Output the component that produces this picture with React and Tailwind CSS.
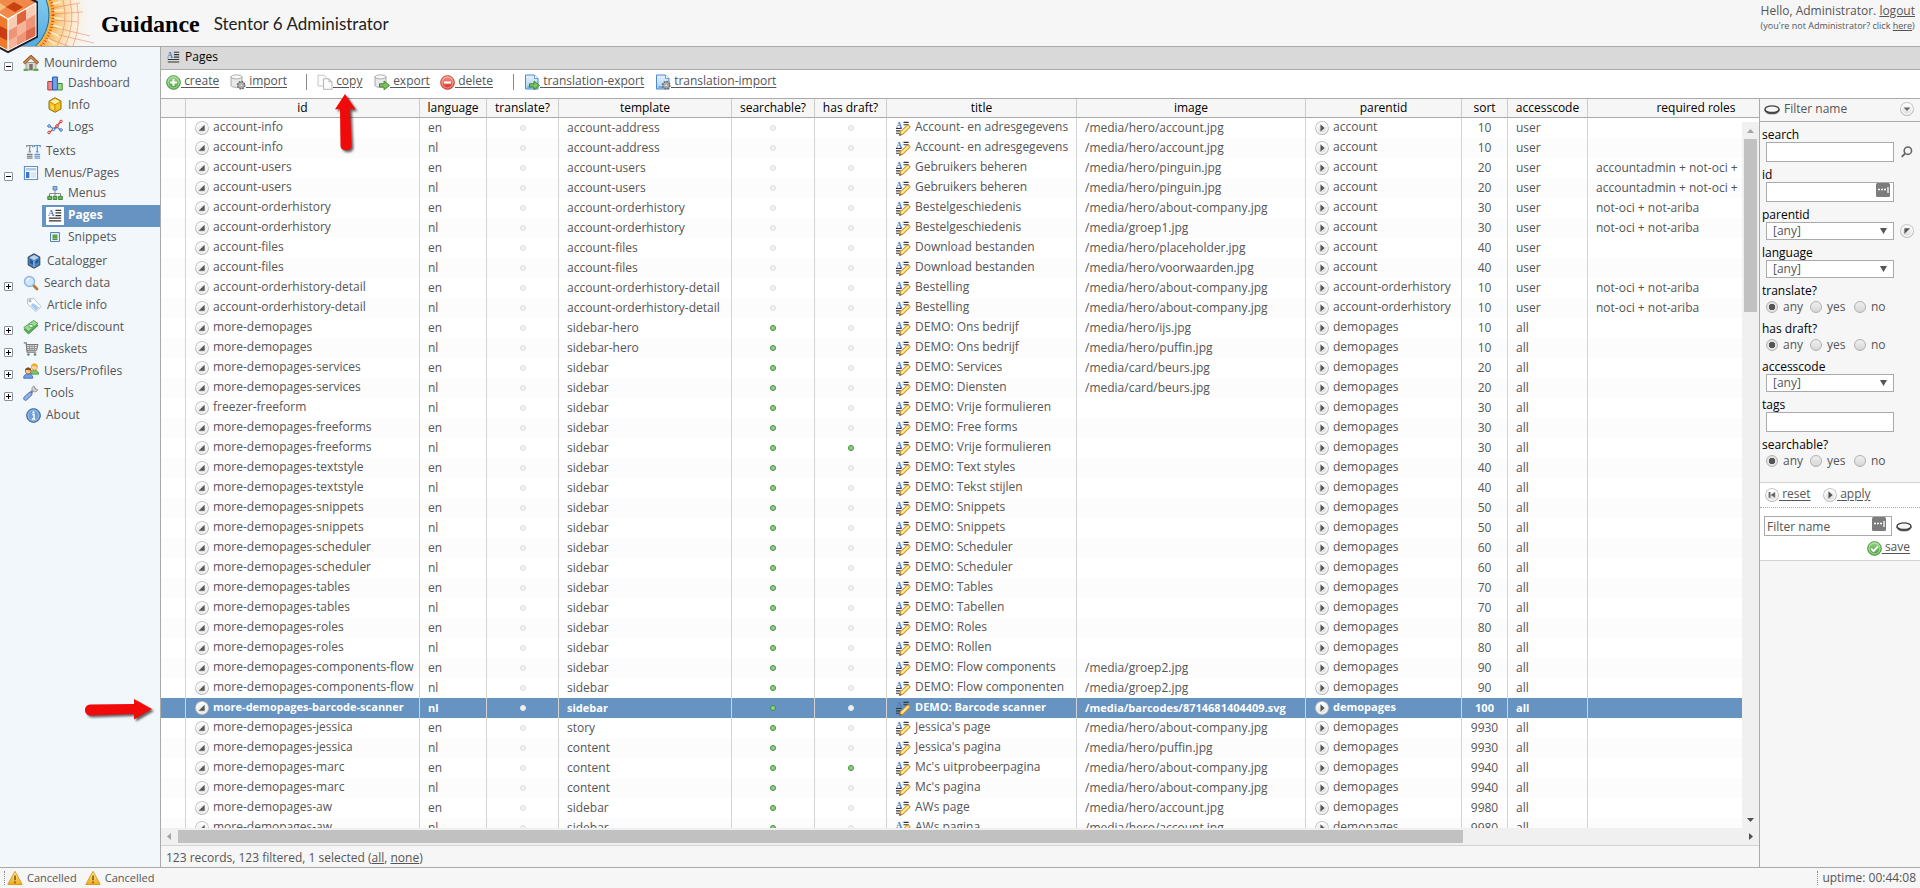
import clsx from 'clsx'

const columns = [
    { key: 'mark', label: '', width: 'w-[25px]' },
    { key: 'id', label: 'id', width: 'w-[234px]' },
    { key: 'language', label: 'language', width: 'w-[67px]' },
    { key: 'translate', label: 'translate?', width: 'w-[72px]' },
    { key: 'template', label: 'template', width: 'w-[173px]' },
    { key: 'searchable', label: 'searchable?', width: 'w-[83px]' },
    { key: 'draft', label: 'has draft?', width: 'w-[72px]' },
    { key: 'title', label: 'title', width: 'w-[190px]' },
    { key: 'image', label: 'image', width: 'w-[229px]' },
    { key: 'parentid', label: 'parentid', width: 'w-[156px]' },
    { key: 'sort', label: 'sort', width: 'w-[46px]' },
    { key: 'accesscode', label: 'accesscode', width: 'w-[80px]' },
    { key: 'roles', label: 'required roles', width: 'w-[217px]' },
]

// id, language, template, searchable, draft, title, image, parentid, sort, accesscode, roles
const rows = [
    ['account-info', 'en', 'account-address', 0, 0, 'Account- en adresgegevens', '/media/hero/account.jpg', 'account', 10, 'user', ''],
    ['account-info', 'nl', 'account-address', 0, 0, 'Account- en adresgegevens', '/media/hero/account.jpg', 'account', 10, 'user', ''],
    ['account-users', 'en', 'account-users', 0, 0, 'Gebruikers beheren', '/media/hero/pinguin.jpg', 'account', 20, 'user', 'accountadmin + not-oci +'],
    ['account-users', 'nl', 'account-users', 0, 0, 'Gebruikers beheren', '/media/hero/pinguin.jpg', 'account', 20, 'user', 'accountadmin + not-oci +'],
    ['account-orderhistory', 'en', 'account-orderhistory', 0, 0, 'Bestelgeschiedenis', '/media/hero/about-company.jpg', 'account', 30, 'user', 'not-oci + not-ariba'],
    ['account-orderhistory', 'nl', 'account-orderhistory', 0, 0, 'Bestelgeschiedenis', '/media/groep1.jpg', 'account', 30, 'user', 'not-oci + not-ariba'],
    ['account-files', 'en', 'account-files', 0, 0, 'Download bestanden', '/media/hero/placeholder.jpg', 'account', 40, 'user', ''],
    ['account-files', 'nl', 'account-files', 0, 0, 'Download bestanden', '/media/hero/voorwaarden.jpg', 'account', 40, 'user', ''],
    ['account-orderhistory-detail', 'en', 'account-orderhistory-detail', 0, 0, 'Bestelling', '/media/hero/about-company.jpg', 'account-orderhistory', 10, 'user', 'not-oci + not-ariba'],
    ['account-orderhistory-detail', 'nl', 'account-orderhistory-detail', 0, 0, 'Bestelling', '/media/hero/about-company.jpg', 'account-orderhistory', 10, 'user', 'not-oci + not-ariba'],
    ['more-demopages', 'en', 'sidebar-hero', 1, 0, 'DEMO: Ons bedrijf', '/media/hero/ijs.jpg', 'demopages', 10, 'all', ''],
    ['more-demopages', 'nl', 'sidebar-hero', 1, 0, 'DEMO: Ons bedrijf', '/media/hero/puffin.jpg', 'demopages', 10, 'all', ''],
    ['more-demopages-services', 'en', 'sidebar', 1, 0, 'DEMO: Services', '/media/card/beurs.jpg', 'demopages', 20, 'all', ''],
    ['more-demopages-services', 'nl', 'sidebar', 1, 0, 'DEMO: Diensten', '/media/card/beurs.jpg', 'demopages', 20, 'all', ''],
    ['freezer-freeform', 'nl', 'sidebar', 1, 0, 'DEMO: Vrije formulieren', '', 'demopages', 30, 'all', ''],
    ['more-demopages-freeforms', 'en', 'sidebar', 1, 0, 'DEMO: Free forms', '', 'demopages', 30, 'all', ''],
    ['more-demopages-freeforms', 'nl', 'sidebar', 1, 1, 'DEMO: Vrije formulieren', '', 'demopages', 30, 'all', ''],
    ['more-demopages-textstyle', 'en', 'sidebar', 1, 0, 'DEMO: Text styles', '', 'demopages', 40, 'all', ''],
    ['more-demopages-textstyle', 'nl', 'sidebar', 1, 0, 'DEMO: Tekst stijlen', '', 'demopages', 40, 'all', ''],
    ['more-demopages-snippets', 'en', 'sidebar', 1, 0, 'DEMO: Snippets', '', 'demopages', 50, 'all', ''],
    ['more-demopages-snippets', 'nl', 'sidebar', 1, 0, 'DEMO: Snippets', '', 'demopages', 50, 'all', ''],
    ['more-demopages-scheduler', 'en', 'sidebar', 1, 0, 'DEMO: Scheduler', '', 'demopages', 60, 'all', ''],
    ['more-demopages-scheduler', 'nl', 'sidebar', 1, 0, 'DEMO: Scheduler', '', 'demopages', 60, 'all', ''],
    ['more-demopages-tables', 'en', 'sidebar', 1, 0, 'DEMO: Tables', '', 'demopages', 70, 'all', ''],
    ['more-demopages-tables', 'nl', 'sidebar', 1, 0, 'DEMO: Tabellen', '', 'demopages', 70, 'all', ''],
    ['more-demopages-roles', 'en', 'sidebar', 1, 0, 'DEMO: Roles', '', 'demopages', 80, 'all', ''],
    ['more-demopages-roles', 'nl', 'sidebar', 1, 0, 'DEMO: Rollen', '', 'demopages', 80, 'all', ''],
    ['more-demopages-components-flow', 'en', 'sidebar', 1, 0, 'DEMO: Flow components', '/media/groep2.jpg', 'demopages', 90, 'all', ''],
    ['more-demopages-components-flow', 'nl', 'sidebar', 1, 0, 'DEMO: Flow componenten', '/media/groep2.jpg', 'demopages', 90, 'all', ''],
    ['more-demopages-barcode-scanner', 'nl', 'sidebar', 1, 0, 'DEMO: Barcode scanner', '/media/barcodes/8714681404409.svg', 'demopages', 100, 'all', ''],
    ['more-demopages-jessica', 'en', 'story', 1, 0, "Jessica's page", '/media/hero/about-company.jpg', 'demopages', 9930, 'all', ''],
    ['more-demopages-jessica', 'nl', 'content', 1, 0, "Jessica's pagina", '/media/hero/puffin.jpg', 'demopages', 9930, 'all', ''],
    ['more-demopages-marc', 'en', 'content', 1, 1, "Mc's uitprobeerpagina", '/media/hero/about-company.jpg', 'demopages', 9940, 'all', ''],
    ['more-demopages-marc', 'nl', 'content', 1, 0, "Mc's pagina", '/media/hero/about-company.jpg', 'demopages', 9940, 'all', ''],
    ['more-demopages-aw', 'en', 'sidebar', 1, 0, 'AWs page', '/media/hero/account.jpg', 'demopages', 9980, 'all', ''],
    ['more-demopages-aw', 'nl', 'sidebar', 1, 0, 'AWs pagina', '/media/hero/account.jpg', 'demopages', 9980, 'all', ''],
]

const SELECTED = 'more-demopages-barcode-scanner'

const Svg = ({ size = 16, className, children }) => (
    <svg width={size} height={size} viewBox="0 0 16 16" className={clsx('block shrink-0', className)} aria-hidden="true">
        {children}
    </svg>
)

// Shared gradients, referenced by id from the icons
const Gradients = () => (
    <svg width="0" height="0" className="absolute" aria-hidden="true">
        <defs>
            <linearGradient id="silver" x1="0" y1="0" x2="0" y2="1">
                <stop offset="0" stopColor="#fff" />
                <stop offset="1" stopColor="#dcdcdc" />
            </linearGradient>
            <linearGradient id="green" x1="0" y1="0" x2="0" y2="1">
                <stop offset="0" stopColor="#9fd68c" />
                <stop offset="1" stopColor="#3f9c35" />
            </linearGradient>
            <linearGradient id="red" x1="0" y1="0" x2="0" y2="1">
                <stop offset="0" stopColor="#f79a8c" />
                <stop offset="1" stopColor="#d8271c" />
            </linearGradient>
            <linearGradient id="blue" x1="0" y1="0" x2="0" y2="1">
                <stop offset="0" stopColor="#e6f2fd" />
                <stop offset="1" stopColor="#a9cff3" />
            </linearGradient>
            <linearGradient id="amber" x1="0" y1="0" x2="0" y2="1">
                <stop offset="0" stopColor="#fff3a0" />
                <stop offset="1" stopColor="#f0a818" />
            </linearGradient>
            <radialGradient id="glow" cx="6" cy="15" r="88" gradientUnits="userSpaceOnUse">
                <stop offset="0.5" stopColor="#f2a73a" />
                <stop offset="0.62" stopColor="#f8d08a" />
                <stop offset="0.78" stopColor="#fcecd0" />
                <stop offset="1" stopColor="#f6f6f6" stopOpacity="0" />
            </radialGradient>
            <linearGradient id="sky" x1="0" y1="0" x2="0" y2="1">
                <stop offset="0" stopColor="#9adcf6" />
                <stop offset="1" stopColor="#4aa2dc" />
            </linearGradient>
            <clipPath id="banner"><path d="M0 0h96v46H0z" /></clipPath>
        </defs>
    </svg>
)

/* ---- icons ---- */

const RoundButton = ({ size = 14, children }) => (
    <Svg size={size}>
        <circle cx="8" cy="8.2" r="7.8" fill="#b4b4b4" />
        <circle cx="8" cy="7.8" r="7.6" fill="#cdcdcd" />
        <circle cx="8" cy="7.8" r="6.7" fill="#fff" />
        <circle cx="8" cy="7.8" r="5.6" fill="url(#silver)" />
        {children}
    </Svg>
)
const OpenIcon = () => <RoundButton><path d="M11 4.4v6.8H4.2z" fill="#555" /></RoundButton>
const PlayIcon = () => <RoundButton><path d="M6.2 3.8L11 8l-4.800 4.200z" fill="#555" /></RoundButton>
const DownIcon = () => <RoundButton><path d="M4.2 6.2h7.6L8 10.400z" fill="#666" /></RoundButton>
const CornerIcon = () => <RoundButton><path d="M5 4.800h6.600L5 11.400z" fill="#555" /></RoundButton>
const RewindIcon = () => <RoundButton><path d="M4.2 4.600h2v6.600h-2zM11.600 4.600v6.600L6.400 7.900z" fill="#666" /></RoundButton>

const TextLines = () => (
    <>
        <text x="0" y="8" fontSize="10" fontWeight="bold" fontFamily="Liberation Serif, serif" fill="#4a80bd">A</text>
        <path d="M8.5 1.5H15M8.5 4.500H15M8.500 7.500H15M1 10.500h14M1 13.500h14" stroke="#333" strokeWidth="1.4" />
    </>
)
const PagesIcon = ({ size = 14 }) => <Svg size={size}><TextLines /></Svg>
const EditIcon = () => (
    <Svg size={15}>
        <text x="0" y="7.500" fontSize="9" fontWeight="bold" fontFamily="Liberation Serif, serif" fill="#4a80bd">A</text>
        <path d="M8 1.500h5.500M8 4h5.500M0 8h6M0 10.500h5M0 13h4" stroke="#333" strokeWidth="1.200" />
        <path d="M3.800 15.200l1-3.800L12 4.400c1.200-.8 3.400 1 2.800 2.400L7.600 14z" fill="#fbd35a" stroke="#c07c28" />
        <path d="M6 12.600L13 6" stroke="#fff1ae" strokeWidth="1.300" />
        <path d="M3.400 15.800l.6-2.600 1.900 1.900z" fill="#7c4a1c" />
    </Svg>
)

const HomeIcon = () => (
    <Svg>
        <path d="M3 7.500h10V15H3z" fill="#d9d4cc" stroke="#8a8378" strokeWidth=".8" />
        <path d="M6.300 9h3.400v6H6.300z" fill="#77726a" />
        <path d="M.8 8.400L8 1.600l7.200 6.800" fill="none" stroke="#8f5a28" strokeWidth="3" />
        <path d="M1.200 8.200L8 1.900l6.800 6.300" fill="none" stroke="#c99253" strokeWidth="1.500" />
        <path d="M.6 14.800h4.600M10.800 14.800h4.600" stroke="#5fae4e" strokeWidth="2.200" />
    </Svg>
)
const DashboardIcon = () => (
    <Svg>
        <path d="M.8 6.500h4.600V15H.8z" fill="#f08c8c" stroke="#c23232" />
        <path d="M5.600 2h4.800v13H5.600z" fill="#6fa4ea" stroke="#2456a8" />
        <path d="M10.600 8.500h4.600V15h-4.600z" fill="#9ed790" stroke="#3c8a34" />
    </Svg>
)
const InfoIcon = () => (
    <Svg>
        <path d="M8 .7l6 3.400v7.800l-6 3.400-6-3.400V4.100z" fill="#f7c51e" stroke="#8a6a10" />
        <path d="M8 2l4.800 2.700L8 7.600 3.200 4.700z" fill="#fff0a0" />
        <path d="M8 7.800v6.200M3 5l5 2.800L13 5" stroke="#d48f10" fill="none" />
        <path d="M4 8l3 1.800v3L4 11z" fill="#fbe065" />
    </Svg>
)
const LogsIcon = () => (
    <Svg>
        <path d="M2 6.500L6.500 10l4-1.500L14 11.500" fill="none" stroke="#4f83cf" strokeWidth="1.300" />
        <path d="M2 13.500L6 10.500l4-3.500 4-5" fill="none" stroke="#d94040" strokeWidth="1.300" />
        <g fill="#f9c9c9" stroke="#d23434" strokeWidth=".9"><circle cx="2" cy="13.500" r="1.300" /><circle cx="10" cy="7" r="1.300" /><circle cx="14" cy="2.500" r="1.300" /></g>
        <g fill="#cfe0f8" stroke="#3a6cba" strokeWidth=".9"><circle cx="2" cy="7" r="1.300" /><circle cx="6.500" cy="10.300" r="1.300" /><circle cx="14" cy="11" r="1.300" /></g>
    </Svg>
)
const TextsIcon = () => (
    <Svg size={15}>
        <path d="M.8 3.500V1.600h6.400v1.900M4 1.600v6.800M2.600 8.400h2.800" fill="none" stroke="#8a8a8a" strokeWidth="1.300" />
        <path d="M8.800 3.500V1.600h6.400v1.900M12 1.600v6.800M10.600 8.400h2.800" fill="none" stroke="#5b93d2" strokeWidth="1.300" />
        <path d="M1 11h6M1 13h6M1 15h6" stroke="#555" />
        <path d="M9 11h6M9 13h6M9 15h6" stroke="#3b78c0" />
    </Svg>
)
const LayoutIcon = () => (
    <Svg>
        <path d="M1.500 1.500h13v13h-13z" fill="#fff" stroke="#5a8fd0" strokeWidth="1.200" />
        <path d="M3 3h10v2.600H3z" fill="#a9cbf0" />
        <path d="M3 7h3.400v6H3z" fill="#3a78c8" />
        <path d="M7.600 7H13v6H7.600z" fill="#dde6ee" />
    </Svg>
)
const TreeIcon = () => (
    <Svg>
        <path d="M8 5v3M2.500 11V8.500h11V11M8 8v3" fill="none" stroke="#888" />
        <path d="M6 1.500h4v3.500H6z" fill="#8db6ea" stroke="#4a79ba" strokeWidth=".8" />
        <g fill="#6abf58" stroke="#2f7d2a" strokeWidth=".9"><path d="M.8 11.300h3.700v3.200H.8z" /><path d="M6.200 11.300h3.700v3.200H6.200z" /><path d="M11.600 11.300h3.700v3.200h-3.700z" /></g>
    </Svg>
)
const SnippetIcon = () => (
    <Svg>
        <path d="M3.500 3.500h9v9h-9z" fill="#e2effb" stroke="#5c83b4" />
        <path d="M5.500 5.500h5v4h-5z" fill="#57a83c" />
        <path d="M5.500 9.800h5v1h-5z" fill="#3c6e2c" />
    </Svg>
)
const CatalogIcon = () => (
    <Svg>
        <path d="M8 .8l5.800 3.200v8L8 15.200 2.200 12V4z" fill="#4a84c0" stroke="#333f4d" />
        <path d="M8 2l4.600 2.500L8 7.200 3.400 4.500z" fill="#b8d2ea" />
        <path d="M4 6.500l3 1.700v3.600L4 10zM9.500 8l2.800-1.500v2.800L9.500 11z" fill="#1e5796" />
        <path d="M8 7.600V14" stroke="#9cc4ea" />
    </Svg>
)
const SearchIcon = () => (
    <Svg>
        <path d="M9.800 9.800l4.200 4.200" stroke="#b87836" strokeWidth="2.800" strokeLinecap="round" />
        <circle cx="6.500" cy="6.500" r="5" fill="#cfe5fb" stroke="#93b6e2" strokeWidth="1.500" />
        <path d="M4 6a3 3 0 0 1 3-2.500" fill="none" stroke="#fff" strokeWidth="1.200" />
    </Svg>
)
const TagIcon = () => (
    <Svg>
        <path d="M1.500 2l6-.8 7.500 8.300-5 5L1.600 7z" fill="#fdfdfd" stroke="#b8c0c8" />
        <path d="M7 6l6 4.500-3.200 3L4.800 8.200z" fill="#9fcdf6" />
        <circle cx="4" cy="3.800" r="1.100" fill="#fff" stroke="#888" strokeWidth=".8" />
    </Svg>
)
const MoneyIcon = () => (
    <Svg>
        <path d="M1 10.500L11 4l4 2.500-9.500 8.500z" fill="#5fb35a" stroke="#2f8238" strokeWidth=".8" />
        <path d="M.8 8.500L10.500 1.500 15 4.500l-9.500 8z" fill="#9ddc92" stroke="#3f9444" strokeWidth=".8" />
        <ellipse cx="8" cy="7" rx="2.200" ry="1.700" fill="#e2f7dc" stroke="#3f9444" strokeWidth=".7" />
    </Svg>
)
const BasketIcon = () => (
    <Svg>
        <path d="M.8 1.800h2.400l1 9.400h9" fill="none" stroke="#777" strokeWidth="1.200" />
        <path d="M3.400 3.500H15l-1.400 5.800H4z" fill="#e4e4e4" stroke="#777" />
        <path d="M3.800 5.500h11M4 7.500h10M6.500 3.500v6M9 3.500v6M11.500 3.500v6" stroke="#888" strokeWidth=".8" />
        <circle cx="5.400" cy="13.500" r="1.300" fill="#777" /><circle cx="12" cy="13.500" r="1.300" fill="#777" />
    </Svg>
)
const UsersIcon = () => (
    <Svg>
        <path d="M7.500 10c0-3.500 8-3.500 8 0v1.200h-8z" fill="#7cc468" stroke="#3f8a34" strokeWidth=".7" />
        <circle cx="11.400" cy="4" r="3" fill="#fbd9a4" stroke="#cf8b20" strokeWidth=".7" />
        <path d="M8.300 3.600a3.100 3.100 0 0 1 6.200 0c-2 .2-4-1-6.200 0z" fill="#f0ac2c" />
        <path d="M.7 14c0-4 9-4 9 0v1.300h-9z" fill="#6c9fe6" stroke="#2c5cae" strokeWidth=".7" />
        <circle cx="5.200" cy="8" r="2.900" fill="#f7cb98" stroke="#8a4c1c" strokeWidth=".7" />
        <path d="M2.200 7.500a3 3 0 0 1 6 0c-2 .2-4-1.100-6 0z" fill="#8a4c1c" />
    </Svg>
)
const ToolsIcon = () => (
    <Svg>
        <path d="M7 8.500L12.500 3" stroke="#8d8d8d" strokeWidth="2.600" />
        <path d="M14.800 4.600a3 3 0 1 1-3.600-3.600l.4 2.400 1 .9z" fill="#d5d5d5" stroke="#8d8d8d" strokeWidth=".8" />
        <path d="M2.600 13.400L7.200 9" stroke="#3e68b2" strokeWidth="4.400" strokeLinecap="round" />
        <path d="M2.600 13.400L7.200 9" stroke="#8fb2ea" strokeWidth="3" strokeLinecap="round" />
    </Svg>
)
const AboutIcon = () => (
    <Svg size={15}>
        <circle cx="8" cy="8" r="7.300" fill="#4a7fbe" stroke="#2c5c98" />
        <circle cx="8" cy="8" r="5.900" fill="#6f9fd6" stroke="#c4daf2" strokeWidth=".8" />
        <circle cx="8" cy="4.600" r="1.200" fill="#fff" />
        <path d="M6.600 7H8.600v4.500M6.300 11.700h3.600" fill="none" stroke="#fff" strokeWidth="1.500" />
    </Svg>
)

const CreateIcon = () => (
    <Svg size={15}>
        <circle cx="8" cy="8" r="7.300" fill="url(#green)" stroke="#3f8f3a" />
        <circle cx="8" cy="8" r="5.900" fill="none" stroke="#d5f0cb" strokeWidth=".8" />
        <path d="M8 4.300v7.400M4.300 8h7.400" stroke="#fff" strokeWidth="2.200" />
    </Svg>
)
const DeleteIcon = () => (
    <Svg size={15}>
        <circle cx="8" cy="8" r="7.300" fill="url(#red)" stroke="#c0392b" />
        <circle cx="8" cy="8" r="5.900" fill="none" stroke="#fbd0c8" strokeWidth=".8" />
        <path d="M4.200 8h7.600" stroke="#fff" strokeWidth="2.400" />
    </Svg>
)
const SaveIcon = () => (
    <Svg size={15}>
        <circle cx="8" cy="8" r="7.300" fill="url(#green)" stroke="#3f8f3a" />
        <circle cx="8" cy="8" r="5.900" fill="none" stroke="#d5f0cb" strokeWidth=".8" />
        <path d="M4.400 8.200l2.600 2.600 4.800-5" fill="none" stroke="#fff" strokeWidth="2" />
    </Svg>
)
const Disk = () => (
    <>
        <path d="M1 2.800v8.600c0 2.600 11 2.600 11 0V2.800z" fill="#e9e9e9" stroke="#a8a8a8" />
        <ellipse cx="6.500" cy="2.900" rx="5.500" ry="2" fill="#fafafa" stroke="#a8a8a8" />
    </>
)
const Gear = () => (
    <>
        <circle cx="11.200" cy="11.200" r="3.600" fill="#b5b5b5" stroke="#666" strokeWidth="1.600" strokeDasharray="1.700 1.100" />
        <circle cx="11.200" cy="11.200" r="2.900" fill="#c9c9c9" stroke="#777" strokeWidth=".7" />
        <circle cx="11.200" cy="11.200" r="1.300" fill="#fff" stroke="#777" strokeWidth=".7" />
    </>
)
const GreenArrow = () => <path d="M5.500 9.800h4.500V7l5.500 4.500-5.500 4.300V13H5.500z" fill="#7cc25c" stroke="#3a7d2c" strokeWidth=".9" />
const Sheet = () => (
    <>
        <path d="M1.500 1h9l3.500 3.500V15H1.500z" fill="url(#blue)" stroke="#4f88cc" />
        <path d="M10.500 1v3.500H14" fill="#fff" stroke="#4f88cc" strokeWidth=".8" />
        <path d="M3.500 13h5" stroke="#3fa0ea" strokeWidth="1.400" />
    </>
)
const ImportIcon = () => <Svg><Disk /><Gear /></Svg>
const ExportIcon = () => <Svg><Disk /><GreenArrow /></Svg>
const TranslationExportIcon = () => <Svg><Sheet /><GreenArrow /></Svg>
const TranslationImportIcon = () => <Svg><Sheet /><Gear /></Svg>
const CopyIcon = () => (
    <Svg>
        <path d="M1 1.200h6l2.500 2.500V12H1z" fill="#fbfbfb" stroke="#c4c4c4" />
        <path d="M6.500 4.800h5.500l3 3v7.500H6.500z" fill="#fbfbfb" stroke="#b4b4b4" />
        <path d="M12 4.800v3h3" fill="none" stroke="#b4b4b4" />
    </Svg>
)
const WarningIcon = () => (
    <Svg>
        <path d="M8 1.300l7.200 13.200H.8z" fill="url(#amber)" stroke="#d99a28" strokeLinejoin="round" />
        <path d="M8 5.500v4.800M8 11.500v1.700" stroke="#7a5210" strokeWidth="1.500" />
    </Svg>
)
const RingIcon = () => (
    <Svg>
        <ellipse cx="8" cy="9.300" rx="7.500" ry="4" fill="#555" />
        <ellipse cx="8" cy="8.200" rx="7" ry="3.300" fill="#f6f6f6" stroke="#444" strokeWidth="1.400" />
    </Svg>
)
const LensIcon = () => (
    <Svg size={14}>
        <circle cx="9" cy="6.500" r="4.200" fill="none" stroke="#666" strokeWidth="1.800" />
        <path d="M6 9.500L2 13.500" stroke="#666" strokeWidth="2.200" />
    </Svg>
)
const KeeperIcon = () => (
    <svg width="14" height="14" viewBox="0 0 14 14" className="block shrink-0" aria-hidden="true">
        <rect width="14" height="14" rx="1.500" fill="#7c7c7c" />
        <path d="M2 6.500h2M5 6.500h2M8 6.500h2M12 4v6" stroke="#fff" strokeWidth="1.300" />
    </svg>
)

const Logo = () => (
    <svg width="96" height="54" viewBox="0 0 96 54" className="absolute top-0 left-0" aria-hidden="true">
        <g clipPath="url(#banner)">
            <path d="M0 0h96v46H0z" fill="url(#glow)" />
            <path d="M52 8l28-5M53 14l30-2M54 20l24 2M53 27l37 9M50 33l44 10M47 38l24 9" stroke="#e5755a" strokeWidth=".8" opacity=".6" />
            <path d="M63 0a62 62 0 0 1-6 46M70 0a70 70 0 0 1-5 46M77 4a76 76 0 0 1-4 42" fill="none" stroke="#e5755a" strokeWidth=".8" opacity=".6" />
            <path d="M52 4l9-2M54 11l9-1M54 18l9 1M53 25l9 3M50 32l9 4M46 38l9 6" stroke="#fff3d2" strokeWidth="2" opacity=".8" />
            <circle cx="6" cy="15" r="45.500" fill="none" stroke="#f7b53c" strokeWidth="4" />
            <circle cx="6" cy="15" r="47" fill="none" stroke="#d84a30" strokeWidth="3" strokeDasharray="1 2" />
            <circle cx="6" cy="15" r="43" fill="url(#sky)" stroke="#24699e" />
        </g>
        <path d="M8-13L37 2v35L8 52-21 37V2z" fill="#d9542b" stroke="#1b1b26" strokeWidth="2" />
        <path d="M8-10L36 3 8 19-20 3z" fill="#ef8a4a" />
        <path d="M8 19L36 3v33L8 50z" fill="#ee9478" />
        <path d="M8 19L-20 3v33L8 50z" fill="#c93c14" />
        <path d="M8 19l9-5v12l-9 5zM26 9l10-6v11l-10 6z" fill="#f9cdb4" />
        <path d="M17 25l9-5v11l-9 6zM8 41l9-5v10l-9 4z" fill="#f6b49a" />
        <path d="M26 31l10-5v10l-10 5z" fill="#dc6a4c" />
        <path d="M17 14l9-5v11l-9 5z" fill="#e0623a" />
        <path d="M0 14l8 5v11l-8-4zM0 37l8 4v9l-8-4z" fill="#f07a2c" />
        <path d="M14 2l9 5-8 5-9-5z" fill="#c8420f" />
        <path d="M0 3l6 4-6 4z" fill="#f9bf7a" />
        <path d="M8 19v31M8 19L36 3M8 19L-20 3" stroke="#fff" strokeWidth="1.400" fill="none" />
        <path d="M36 3v33L8 50.500-20 36" stroke="#fff" strokeWidth="1" fill="none" />
    </svg>
)

const ArrowShape = () => (
    <path d="M2 12a5 5 0 0 1 5-5.500L51 6V1l18 10-18 10.500V16L7 17.500A5 5 0 0 1 2 12z" fill="#f00a0a" />
)

/* ---- navigation ---- */

const menu = [
    {
        label: 'Mounirdemo', icon: HomeIcon, children: [
            { label: 'Dashboard', icon: DashboardIcon },
            { label: 'Info', icon: InfoIcon },
            { label: 'Logs', icon: LogsIcon },
        ],
    },
    { label: 'Texts', icon: TextsIcon },
    {
        label: 'Menus/Pages', icon: LayoutIcon, children: [
            { label: 'Menus', icon: TreeIcon },
            { label: 'Pages', icon: PagesIcon, active: true },
            { label: 'Snippets', icon: SnippetIcon },
        ],
    },
    { label: 'Catalogger', icon: CatalogIcon },
    { label: 'Search data', icon: SearchIcon, closed: true },
    { label: 'Article info', icon: TagIcon },
    { label: 'Price/discount', icon: MoneyIcon, closed: true },
    { label: 'Baskets', icon: BasketIcon, closed: true },
    { label: 'Users/Profiles', icon: UsersIcon, closed: true },
    { label: 'Tools', icon: ToolsIcon, closed: true },
    { label: 'About', icon: AboutIcon },
]

const Toggle = ({ open, label }) => (
    <button type="button" aria-label={`Toggle ${label}`} aria-expanded={open} className="mt-1.5 ml-1 flex size-[9px] shrink-0 items-center justify-center rounded-[1px] border border-[#8a8f9c] bg-white">
        <svg width="5" height="5" viewBox="0 0 5 5" aria-hidden="true">
            <path d={open ? 'M0 2.500h5' : 'M0 2.500h5M2.500 0v5'} stroke="#000" />
        </svg>
    </button>
)

const NavItem = ({ item }) => {
    const Icon = item.icon
    const branch = item.children || item.closed

    return (
        <li className={clsx(item.children && 'mb-0.5')}>
            <div className={clsx('flex items-center', item.children ? 'h-5' : 'h-[22px] pb-0.5')}>
                {branch && <Toggle open={!!item.children} label={item.label} />}
                <a href="#" className={clsx('flex items-center gap-[5px]', branch ? 'ml-[10px]' : 'ml-[26px]')}>
                    <Icon />
                    {item.label}
                </a>
            </div>
            {item.children && (
                <ul className="pl-[42px]">
                    {item.children.map((child) => {
                        const ChildIcon = child.icon
                        return (
                            <li key={child.label}>
                                <a href="#" className={clsx('flex h-[22px] items-center pb-0.5', child.active ? 'gap-1 bg-[#6693c1] pl-1 font-bold text-white' : 'gap-[5px] pl-[5px]')}>
                                    {child.active ? <span className="mt-0.5 flex size-[18px] items-center justify-center bg-white"><ChildIcon /></span> : <ChildIcon />}
                                    {child.label}
                                </a>
                            </li>
                        )
                    })}
                </ul>
            )}
        </li>
    )
}

/* ---- toolbar ---- */

const Action = ({ icon: Icon, label, width }) => (
    <a href="#" className={clsx('flex items-center', width)}>
        <Icon />
        <span className="pb-0.5 whitespace-pre underline underline-offset-2"> {label}</span>
    </a>
)

const Toolbar = () => (
    <div className="flex h-[29px] shrink-0 items-center border-b border-[#aaa] bg-white pb-1 pl-[5px]">
        <Action icon={CreateIcon} label="create" width="w-16" />
        <Action icon={ImportIcon} label="import" width="w-[76px]" />
        <span className="h-4 w-[11px] border-l border-[#888]" />
        <Action icon={CopyIcon} label="copy" width="w-[57px]" />
        <Action icon={ExportIcon} label="export" width="w-[66px]" />
        <Action icon={DeleteIcon} label="delete" width="w-[73px]" />
        <span className="h-4 w-[11px] border-l border-[#888]" />
        <Action icon={TranslationExportIcon} label="translation-export" width="w-[131px]" />
        <Action icon={TranslationImportIcon} label="translation-import" width="w-[131px]" />
    </div>
)

/* ---- table ---- */

const Dot = ({ on, selected }) => (
    <span className={clsx('mx-auto block size-1.5 rounded-full border', on ? 'border-[#3f8f3f] bg-[#8fd08a]' : selected ? 'border-[#eee] bg-[#eee]' : 'border-[#dedede] bg-[#f2f2f2]')} />
)

const IconCell = ({ icon: Icon, children }) => (
    <div className="flex h-5 items-center gap-1 pl-px">
        <Icon />
        <span className="pb-0.5 leading-4">{children}</span>
    </div>
)

const PagesTable = () => (
    <table className="w-[1644px] table-fixed border-separate border-spacing-0 text-left">
        <colgroup>
            {columns.map((c) => <col key={c.key} className={c.width} />)}
        </colgroup>
        <thead>
            <tr>
                {columns.map((c) => (
                    <th key={c.key} className="h-[19px] border-r border-b border-r-[#ccc] border-b-[#aaa] bg-[#f6f6f6] p-0 text-center font-medium leading-[18px] text-black">{c.label}</th>
                ))}
            </tr>
        </thead>
        <tbody>
            {rows.map(([id, language, template, searchable, draft, title, image, parentid, sort, accesscode, roles], i) => {
                const selected = id === SELECTED
                const cell = 'h-5 overflow-hidden border-r border-[#d3d3d3] px-2 py-0 leading-5 whitespace-nowrap'
                return (
                    <tr key={i} className={selected ? 'bg-[#6693c1] text-[11px] font-bold text-white' : i % 2 ? 'bg-[#fcfcfc]' : 'bg-white'}>
                        <td className={cell} />
                        <td className={cell}><IconCell icon={OpenIcon}>{id}</IconCell></td>
                        <td className={cell}>{language}</td>
                        <td className={cell}><Dot selected={selected} /></td>
                        <td className={cell}>{template}</td>
                        <td className={cell}><Dot on={searchable} selected={selected} /></td>
                        <td className={cell}><Dot on={draft} selected={selected} /></td>
                        <td className={cell}><IconCell icon={EditIcon}>{title}</IconCell></td>
                        <td className={cell}>{image}</td>
                        <td className={cell}><IconCell icon={PlayIcon}>{parentid}</IconCell></td>
                        <td className={clsx(cell, 'text-center')}>{sort}</td>
                        <td className={cell}>{accesscode}</td>
                        <td className={cell}>{roles}</td>
                    </tr>
                )
            })}
        </tbody>
    </table>
)

/* ---- filter panel ---- */

const box = 'ml-1 block w-32 border border-[#aaa] bg-white'

const Field = ({ id, label, children }) => (
    <div className="pt-1.5">
        <label htmlFor={id} className="block leading-[14px] text-black">{label}</label>
        {children}
    </div>
)

const TextField = ({ id, label, badge, after }) => (
    <Field id={id} label={label}>
        <div className="relative flex items-center gap-1.5">
            <input id={id} type="text" className={clsx(box, 'h-5 px-1')} />
            {badge && <span className="absolute top-px left-[114px]"><KeeperIcon /></span>}
            {after}
        </div>
    </Field>
)

const SelectField = ({ id, label, after }) => (
    <Field id={id} label={label}>
        <div className="relative flex h-[18px] items-center gap-1.5">
            <select id={id} className={clsx(box, 'h-[18px] appearance-none pl-1.5 leading-4')}>
                <option>[any]</option>
            </select>
            <svg width="7" height="6" viewBox="0 0 7 6" className="pointer-events-none absolute top-1.5 left-[118px]" aria-hidden="true"><path d="M0 0h7L3.500 6z" fill="#555" /></svg>
            {after}
        </div>
    </Field>
)

const RadioField = ({ name, label }) => (
    <fieldset className="pt-1.5">
        <legend className="float-left w-full leading-[14px] text-black">{label}</legend>
        <div className="flex h-[18px] w-full items-center pl-1">
            {['any', 'yes', 'no'].map((option) => (
                <label key={option} className="flex w-11 items-center gap-[5px] leading-4">
                    <input
                        type="radio"
                        name={name}
                        defaultChecked={option === 'any'}
                        className="size-3 shrink-0 appearance-none rounded-full border border-[#b0b0b0] bg-linear-to-b from-[#f0f0f0] to-[#d6d6d6] checked:bg-[radial-gradient(circle,#555_0_3px,#e4e4e4_3px)]"
                    />
                    {option}
                </label>
            ))}
        </div>
    </fieldset>
)

const FilterPanel = () => (
    <aside className="w-[161px] shrink-0 border-l border-[#aaa] bg-[#f6f6f6]">
        <div className="flex h-[23px] items-center gap-1 border-b border-[#aaa] pr-1.5 pb-0.5 pl-1">
            <RingIcon />
            <span className="grow">Filter name</span>
            <button type="button" aria-label="Filter menu"><DownIcon /></button>
        </div>
        <form className="pb-3 pl-0.5">
            <TextField id="search" label="search" after={<button type="button" aria-label="Search"><LensIcon /></button>} />
            <TextField id="id" label="id" badge />
            <SelectField id="parentid" label="parentid" after={<button type="button" aria-label="Pick parent"><CornerIcon /></button>} />
            <SelectField id="language" label="language" />
            <RadioField name="translate" label="translate?" />
            <RadioField name="draft" label="has draft?" />
            <SelectField id="accesscode" label="accesscode" />
            <TextField id="tags" label="tags" />
            <RadioField name="searchable" label="searchable?" />
        </form>
        <div className="border-y border-[#d3d3d3] bg-white">
            <div className="flex h-[25px] items-center border-b border-dotted border-[#aaa] pl-[5px]">
                <Action icon={RewindIcon} label="reset" width="w-[58px]" />
                <Action icon={PlayIcon} label="apply" />
            </div>
            <div className="relative flex items-center gap-1 pt-2">
                <input type="text" aria-label="Filter name" defaultValue="Filter name" className={clsx(box, 'h-5 px-0.5')} />
                <span className="absolute top-[9px] left-[112px]"><KeeperIcon /></span>
                <RingIcon />
            </div>
            <div className="flex h-6 items-center justify-end pr-[10px]">
                <Action icon={SaveIcon} label="save" />
            </div>
        </div>
    </aside>
)

export default function App() {
    return (
        <div className="flex h-screen flex-col overflow-hidden bg-[#f6f6f6] font-['Open_Sans','Noto_Sans',sans-serif] text-xs font-medium text-[#555]">
            <Gradients />
            <header className="relative z-10 flex h-[47px] shrink-0 justify-between border-b border-[#aaa] bg-[#f6f6f6] pr-[5px] pl-[101px]">
                <Logo />
                <h1 className="flex items-center gap-[14px] pt-0.5 text-black">
                    <span className="font-['Liberation_Serif',serif] text-2xl font-bold">Guidance</span>
                    <span className="font-['Lato',sans-serif] text-[17px] font-normal text-[#222]">Stentor 6 Administrator</span>
                </h1>
                <div className="pt-[3px]">
                    <p className="leading-4">Hello, Administrator. <a href="#" className="underline">logout</a></p>
                    <p className="text-[9px] leading-[14px]">(you're not Administrator? click <a href="#" className="underline">here</a>)</p>
                </div>
            </header>

            <div className="relative flex min-h-0 grow">
                <nav className="w-[161px] shrink-0 border-r border-[#aaa] bg-[#f2f7fb] pt-1.5">
                    <ul>
                        {menu.map((item) => <NavItem key={item.label} item={item} />)}
                    </ul>
                </nav>

                <div className="flex min-w-0 grow flex-col">
                    <h2 className="flex h-[23px] shrink-0 items-center gap-[5px] border-b border-[#aaa] bg-[#d9d9d9] pb-0.5 pl-1.5 font-medium text-black">
                        <PagesIcon size={13} />
                        Pages
                    </h2>
                    <Toolbar />
                    <div className="flex min-h-0 grow">
                        <main className="flex min-w-0 grow flex-col">
                            <div className="flex min-h-0 grow">
                                <div className="min-w-0 grow overflow-hidden bg-white">
                                    <PagesTable />
                                </div>
                                <div className="flex w-[17px] shrink-0 flex-col">
                                    <div className="h-[19px] shrink-0 border-b border-[#aaa] bg-[#f6f6f6]" />
                                    <div className="h-1 shrink-0 bg-white" />
                                    <div className="flex grow flex-col items-center bg-[#f0f0f0] pt-[7px] pb-1.5">
                                        <svg width="7" height="4" viewBox="0 0 7 4" aria-hidden="true"><path d="M0 4h7L3.500 0z" fill="#a3a3a3" /></svg>
                                        <div className="mt-1.5 h-1/4 w-[13px] bg-[#c1c1c1]" />
                                        <span className="grow" />
                                        <svg width="7" height="4" viewBox="0 0 7 4" aria-hidden="true"><path d="M0 0h7L3.500 4z" fill="#505050" /></svg>
                                    </div>
                                </div>
                            </div>
                            <div className="flex h-[17px] shrink-0 items-center bg-[#f0f0f0] px-1.5">
                                <svg width="4" height="7" viewBox="0 0 4 7" className="mr-[7px]" aria-hidden="true"><path d="M4 0v7L0 3.500z" fill="#a3a3a3" /></svg>
                                <div className="h-[13px] w-[81%] bg-[#c1c1c1]" />
                                <span className="grow" />
                                <svg width="4" height="7" viewBox="0 0 4 7" aria-hidden="true"><path d="M0 0v7l4-3.500z" fill="#505050" /></svg>
                            </div>
                            <p className="h-[22px] shrink-0 border-t border-[#d3d3d3] pt-0.5 pl-[5px] leading-5">
                                123 records, 123 filtered, 1 selected (<a href="#" className="underline">all</a>, <a href="#" className="underline">none</a>)
                            </p>
                        </main>
                        <FilterPanel />
                    </div>
                </div>

                {/* pointers over the toolbar and the selected row */}
                <svg width="28" height="66" viewBox="0 0 28 66" className="absolute top-[47px] left-[333px] drop-shadow-[2px_2px_1px_rgba(0,0,0,0.6)]" aria-hidden="true">
                    <g transform="matrix(0 -.84 1 0 1 58)"><ArrowShape /></g>
                </svg>
                <svg width="74" height="28" viewBox="0 0 74 28" className="absolute top-[651px] left-[83px] drop-shadow-[2px_2px_1px_rgba(0,0,0,0.6)]" aria-hidden="true">
                    <ArrowShape />
                </svg>
            </div>

            <footer className="flex h-[21px] shrink-0 items-center justify-between border-t border-[#aaa] px-1 font-normal">
                <div className="flex h-[14px] items-center border-l border-dotted border-[#888] pl-0.5 text-[11px]">
                    <span className="flex items-center gap-1 pr-2"><WarningIcon /> Cancelled</span>
                    <span className="flex items-center gap-1"><WarningIcon /> Cancelled</span>
                </div>
                <div className="flex h-[14px] items-center border-l border-dotted border-[#888] pl-1">uptime: 00:44:08</div>
            </footer>
        </div>
    )
}
